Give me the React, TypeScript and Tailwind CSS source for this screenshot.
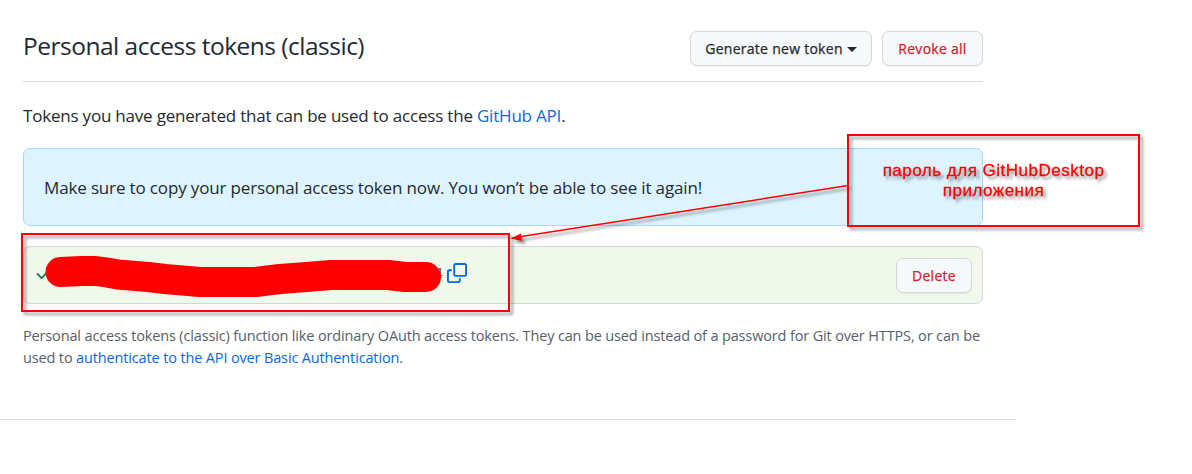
import type { ReactNode } from "react";

function Button({ children, className = "" }: { children: ReactNode; className?: string }) {
  return (
    <button
      className={`flex h-[35px] shrink-0 items-center justify-center whitespace-nowrap rounded-[7px] border border-[#d3d7da] bg-[#f6f8fa] text-[14px] font-medium tracking-[0.27px] shadow-[0_1px_0_rgba(31,35,40,0.05)] [-webkit-text-stroke:0.25px_currentColor] ${className}`}
    >
      {children}
    </button>
  );
}

function CopyIcon() {
  return (
    <svg className="relative -top-0.5 h-5 w-5 text-[#0969da]" viewBox="0 0 16 16" fill="currentColor" aria-hidden="true">
      <path d="M0 6.75C0 5.784.784 5 1.75 5h1.5a.75.75 0 0 1 0 1.5h-1.5a.25.25 0 0 0-.25.25v7.5c0 .138.112.25.25.25h7.5a.25.25 0 0 0 .25-.25v-1.5a.75.75 0 0 1 1.5 0v1.5A1.75 1.75 0 0 1 9.25 16h-7.5A1.75 1.75 0 0 1 0 14.25Z" />
      <path d="M5 1.75C5 .784 5.784 0 6.75 0h7.5C15.216 0 16 .784 16 1.75v7.5A1.75 1.75 0 0 1 14.25 11h-7.5A1.75 1.75 0 0 1 5 9.25Zm1.75-.25a.25.25 0 0 0-.25.25v7.5c0 .138.112.25.25.25h7.5a.25.25 0 0 0 .25-.25v-7.5a.25.25 0 0 0-.25-.25Z" />
    </svg>
  );
}

function Annotations() {
  return (
    <div className="pointer-events-none absolute inset-0">
      <svg className="absolute inset-0" width="1192" height="474" viewBox="0 0 1192 474" fill="none">
        <path
          d="M60.5 272 L82 271 L96 271 L107 272.5 L118 274.5 L148 277 L165 279 L200 282 L255 282 L280 279 L300 277.5 L331 275 L388 275 L405 277 L426 277"
          stroke="#ff0000"
          strokeWidth="30"
          strokeLinecap="round"
          strokeLinejoin="round"
        />
        <g className="drop-shadow-[3px_3px_1.5px_rgba(0,0,0,0.45)]">
          <path d="M848 185.5 L518 237" stroke="#ff0000" strokeWidth="1.5" />
          <path d="M510.5 238.5 L521 233.5 L522 241 Z" fill="#ff0000" />
        </g>
      </svg>
      <div className="absolute left-[21px] top-[233px] h-[79px] w-[489px] border-2 border-[#ff0000] drop-shadow-[3px_3px_1.5px_rgba(0,0,0,0.4)]" />
      <div className="absolute left-[847px] top-[134px] h-[93px] w-[293px] border-2 border-[#ff0000] drop-shadow-[3px_3px_1.5px_rgba(0,0,0,0.4)]">
        <p className="whitespace-nowrap pt-[25px] text-center font-['Liberation_Sans',sans-serif] text-[17px] leading-5 tracking-[0.5px] text-[#ff0000] [-webkit-text-stroke:0.3px_#ff0000]">
          пароль для GitHubDesktop
          <br />
          приложения
        </p>
      </div>
    </div>
  );
}

export default function App() {
  return (
    <div className="relative h-[474px] w-[1192px] overflow-hidden bg-white font-['Open_Sans','Noto_Sans',sans-serif] text-[#24292f]">
      <main className="h-[420px] w-[1016px] border-b border-[#d8dee4] pl-[23px] pr-[33px]">
        <header className="flex h-[82px] items-start justify-between border-b border-[#d8dee4] pt-[31px]">
          <h1 className="whitespace-nowrap text-[24.5px] leading-[30px] tracking-[-0.5px]">Personal access tokens (classic)</h1>
          <div className="flex gap-2.5">
            <Button className="w-[182px] gap-1">
              Generate new token
              <span className="mt-0.5 border-x-[5px] border-t-[5px] border-x-transparent border-t-[#24292f]" />
            </Button>
            <Button className="w-[101px] text-[#cf222e]">Revoke all</Button>
          </div>
        </header>
        <p className="mt-[21px] whitespace-nowrap text-[17px] leading-[26px] tracking-[-0.205px]">
          Tokens you have generated that can be used to access the <a className="text-[#0969da]">GitHub API</a>.
        </p>
        <div className="mt-[19px] flex h-[78px] items-center whitespace-nowrap rounded-[7px] border border-[#a6d7ff] bg-[#ddf4ff] pt-0.5 pl-5 text-[17px] tracking-[-0.15px]">
          Make sure to copy your personal access token now. You won’t be able to see it again!
        </div>
        <div className="mt-5 flex h-[58px] items-center justify-between rounded-[7px] border border-[#d0d7de] bg-[#f0f8ec] pl-2.5 pr-2.5">
          <div className="flex items-center">
            <svg className="relative -top-0.5 h-5 w-5 text-[#1a7f37]" viewBox="0 0 16 16" fill="currentColor" aria-hidden="true">
              <path d="M13.78 4.22a.75.75 0 0 1 0 1.06l-7.25 7.25a.75.75 0 0 1-1.06 0L2.22 9.28a.75.75 0 0 1 1.06-1.06L6 10.94l6.72-6.72a.75.75 0 0 1 1.06 0Z" />
            </svg>
            <code className="mr-1 w-[389px] text-right font-['Liberation_Mono',monospace] text-[15px] leading-5 text-[#57606a]">4</code>
            <CopyIcon />
          </div>
          <Button className="w-[76px] text-[#cf222e]">Delete</Button>
        </div>
        <p className="mt-[21px] whitespace-nowrap text-[14.5px] leading-[22px] tracking-[-0.145px] text-[#57606a]">
          Personal access tokens (classic) function like ordinary OAuth access tokens. They can be used instead of a password for Git over HTTPS, or can be
          <br />
          used to <a className="text-[#0969da]">authenticate to the API over Basic Authentication</a>.
        </p>
      </main>
      <Annotations />
    </div>
  );
}
